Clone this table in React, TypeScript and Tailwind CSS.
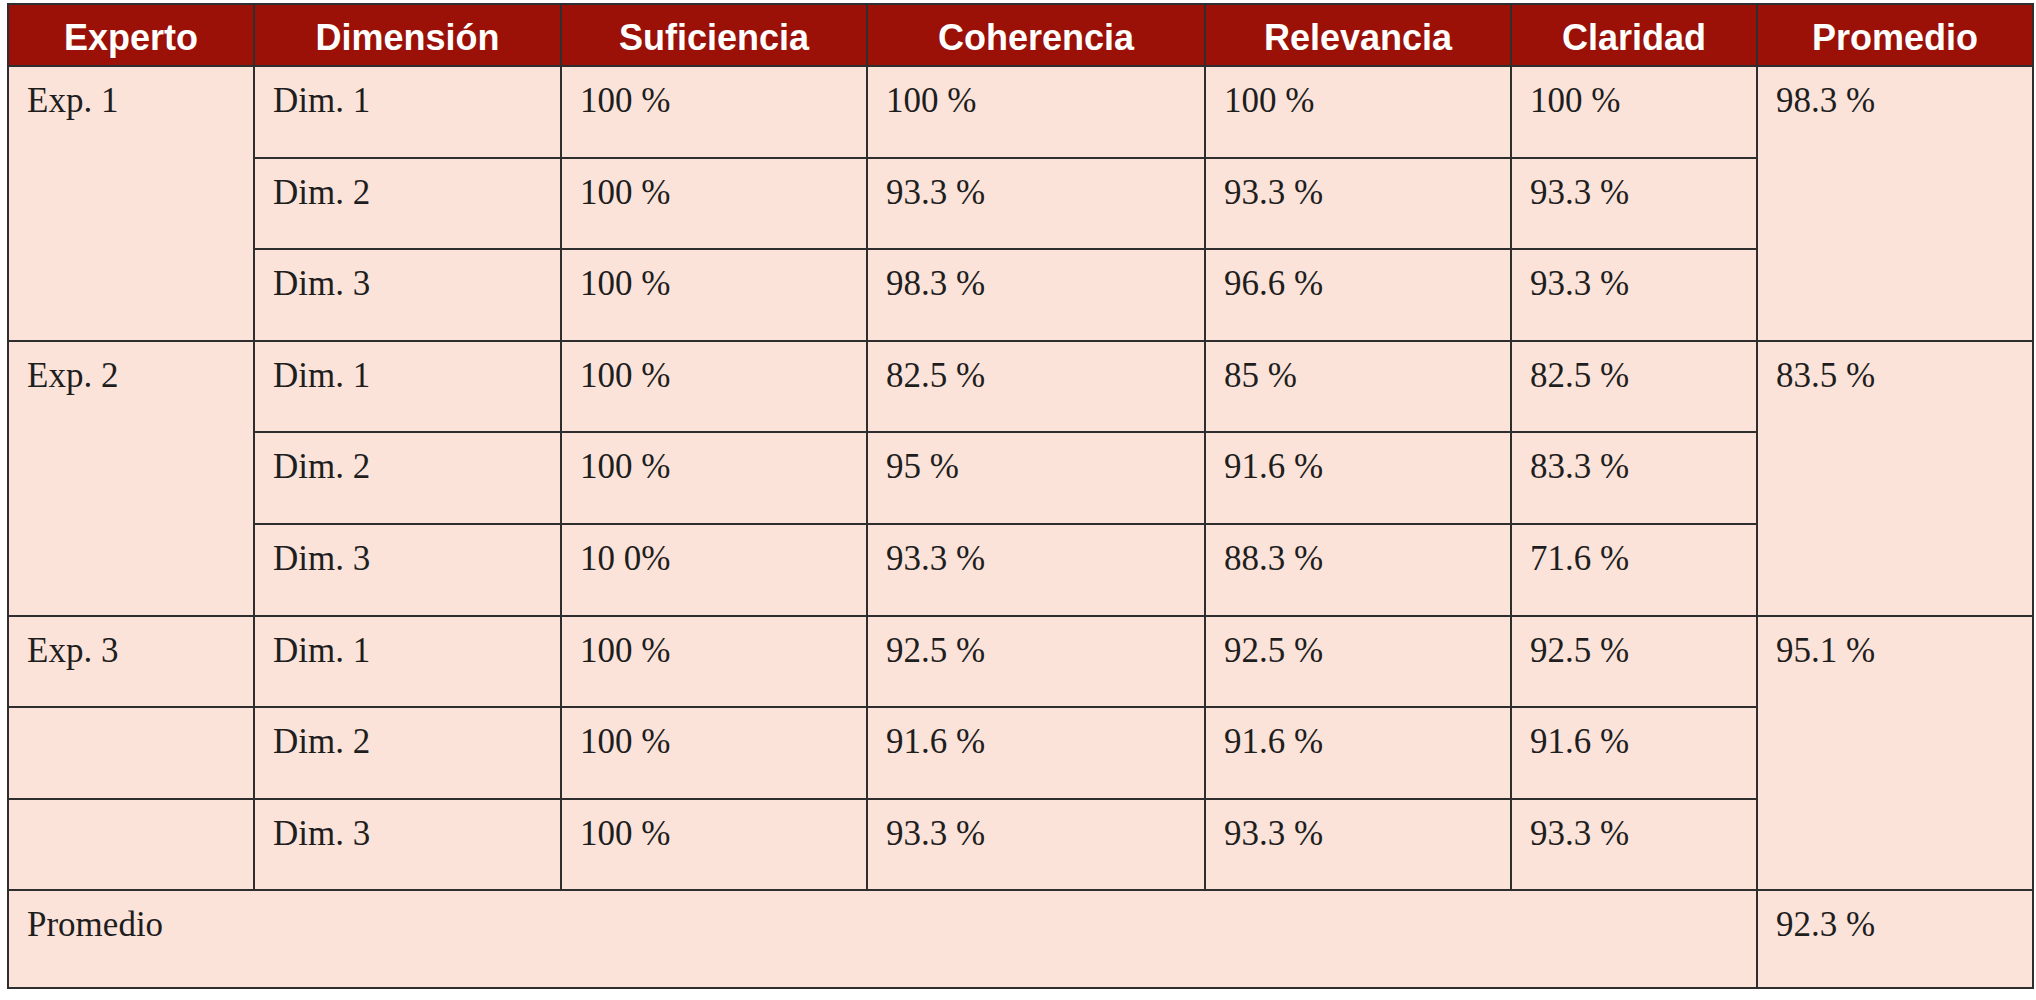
const headers = [
  "Experto",
  "Dimensión",
  "Suficiencia",
  "Coherencia",
  "Relevancia",
  "Claridad",
  "Promedio",
];

type Group = {
  expert: string;
  merged: boolean;
  average: string;
  rows: string[][];
};

const groups: Group[] = [
  {
    expert: "Exp. 1",
    merged: true,
    average: "98.3 %",
    rows: [
      ["Dim. 1", "100 %", "100 %", "100 %", "100 %"],
      ["Dim. 2", "100 %", "93.3 %", "93.3 %", "93.3 %"],
      ["Dim. 3", "100 %", "98.3 %", "96.6 %", "93.3 %"],
    ],
  },
  {
    expert: "Exp. 2",
    merged: true,
    average: "83.5 %",
    rows: [
      ["Dim. 1", "100 %", "82.5 %", "85 %", "82.5 %"],
      ["Dim. 2", "100 %", "95 %", "91.6 %", "83.3 %"],
      ["Dim. 3", "10 0%", "93.3 %", "88.3 %", "71.6 %"],
    ],
  },
  {
    expert: "Exp. 3",
    merged: false,
    average: "95.1 %",
    rows: [
      ["Dim. 1", "100 %", "92.5 %", "92.5 %", "92.5 %"],
      ["Dim. 2", "100 %", "91.6 %", "91.6 %", "91.6 %"],
      ["Dim. 3", "100 %", "93.3 %", "93.3 %", "93.3 %"],
    ],
  },
];

const cell =
  "border-2 border-[#2e2e2e] bg-[#fce3d9] px-[18px] pt-[16px] align-top text-[35px] leading-none text-[#1e1e1e]";

export default function App() {
  return (
    <div className="min-h-screen bg-white pl-[7px] pt-[3px]">
      <table
        className="w-[2025px] table-fixed border-collapse"
        style={{ fontFamily: '"Liberation Serif", "Times New Roman", serif' }}
      >
        <colgroup>
          <col className="w-[246px]" />
          <col className="w-[307px]" />
          <col className="w-[306px]" />
          <col className="w-[338px]" />
          <col className="w-[306px]" />
          <col className="w-[246px]" />
          <col className="w-[276px]" />
        </colgroup>
        <thead>
          <tr className="h-[62px]">
            {headers.map((h) => (
              <th
                key={h}
                className="border-2 border-[#2e2e2e] bg-[#9b1107] pt-[5px] text-center align-middle text-[36px] font-bold leading-none text-white"
                style={{ fontFamily: '"Liberation Sans", Arial, sans-serif' }}
              >
                {h}
              </th>
            ))}
          </tr>
        </thead>
        <tbody>
          {groups.map((g) =>
            g.rows.map((r, i) => (
              <tr key={g.expert + i} className="h-[91.6px]">
                {g.merged ? (
                  i === 0 && (
                    <td rowSpan={3} className={cell}>
                      {g.expert}
                    </td>
                  )
                ) : (
                  <td className={cell}>{i === 0 ? g.expert : ""}</td>
                )}
                {r.map((v, j) => (
                  <td key={j} className={cell}>
                    {v}
                  </td>
                ))}
                {i === 0 && (
                  <td rowSpan={3} className={cell}>
                    {g.average}
                  </td>
                )}
              </tr>
            ))
          )}
          <tr className="h-[98px]">
            <td colSpan={6} className={cell}>
              Promedio
            </td>
            <td className={cell}>92.3 %</td>
          </tr>
        </tbody>
      </table>
    </div>
  );
}
